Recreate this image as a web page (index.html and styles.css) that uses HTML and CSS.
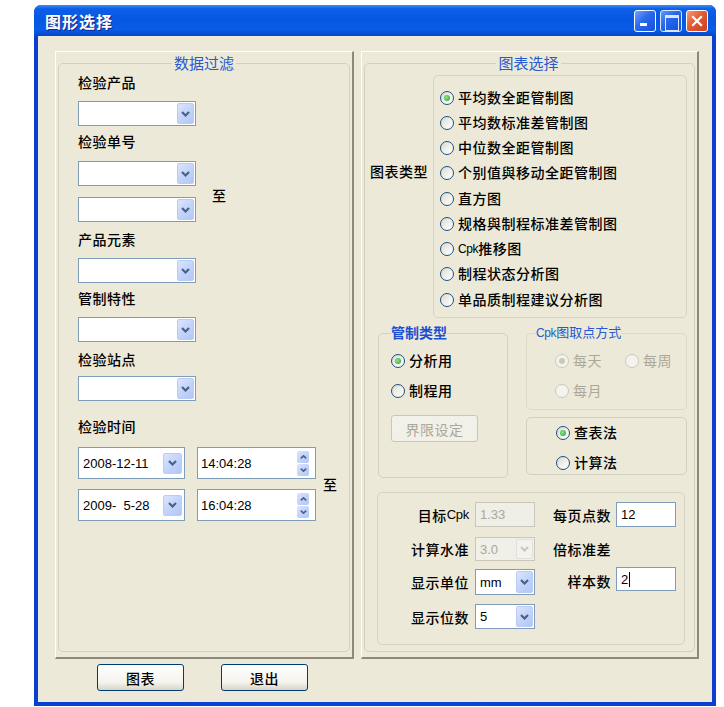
FILE: index.html
```html
<!DOCTYPE html>
<html lang="zh">
<head>
<meta charset="utf-8">
<title>图形选择</title>
<link rel="stylesheet" href="styles.css">
</head>
<body>
<div class="window">
  <div class="titlebar">
    <span class="title">图形选择</span>
    <div class="tb-buttons">
      <span class="tb-btn tb-min"></span>
      <span class="tb-btn tb-max"></span>
      <span class="tb-btn tb-close"><svg viewBox="0 0 12 12" width="12" height="12"><path d="M2 2 L10 10 M10 2 L2 10" stroke="#fff" stroke-width="2.2" stroke-linecap="square" fill="none"/></svg></span>
    </div>
  </div>
  <div class="client">
    <div class="panels">
      <div class="panel panel-left">
        <fieldset class="group group-left">
          <legend>数据过滤</legend>
          <div class="lbl mt2">检验产品</div>
          <div class="combo mt9"><span class="drop"><svg class="chev" viewBox="0 0 9 6"><polyline points="1,1 4.5,4.5 8,1"/></svg></span></div>
          <div class="lbl mt7">检验单号</div>
          <div class="range mt10">
            <div class="range-col">
              <div class="combo"><span class="drop"><svg class="chev" viewBox="0 0 9 6"><polyline points="1,1 4.5,4.5 8,1"/></svg></span></div>
              <div class="combo"><span class="drop"><svg class="chev" viewBox="0 0 9 6"><polyline points="1,1 4.5,4.5 8,1"/></svg></span></div>
            </div>
            <span class="to to-range">至</span>
          </div>
          <div class="lbl mt9">产品元素</div>
          <div class="combo mt9"><span class="drop"><svg class="chev" viewBox="0 0 9 6"><polyline points="1,1 4.5,4.5 8,1"/></svg></span></div>
          <div class="lbl mt7">管制特性</div>
          <div class="combo mt9"><span class="drop"><svg class="chev" viewBox="0 0 9 6"><polyline points="1,1 4.5,4.5 8,1"/></svg></span></div>
          <div class="lbl mt9">检验站点</div>
          <div class="combo mt7"><span class="drop"><svg class="chev" viewBox="0 0 9 6"><polyline points="1,1 4.5,4.5 8,1"/></svg></span></div>
          <div class="lbl mt17">检验时间</div>
          <div class="range mt11">
            <div class="dt-col">
              <div class="dt-row">
                <div class="date"><span class="val">2008-12-11</span><span class="drop drop-date"><svg class="chev" viewBox="0 0 9 6"><polyline points="1,1 4.5,4.5 8,1"/></svg></span></div>
                <div class="time"><span class="val">14:04:28</span><span class="spin"><span><svg class="chev-s" viewBox="0 0 7 4"><polyline points="0.8,3.4 3.5,0.8 6.2,3.4"/></svg></span><span><svg class="chev-s" viewBox="0 0 7 4"><polyline points="0.8,0.6 3.5,3.2 6.2,0.6"/></svg></span></span></div>
              </div>
              <div class="dt-row">
                <div class="date"><span class="val">2009-  5-28</span><span class="drop drop-date"><svg class="chev" viewBox="0 0 9 6"><polyline points="1,1 4.5,4.5 8,1"/></svg></span></div>
                <div class="time"><span class="val">16:04:28</span><span class="spin"><span><svg class="chev-s" viewBox="0 0 7 4"><polyline points="0.8,3.4 3.5,0.8 6.2,3.4"/></svg></span><span><svg class="chev-s" viewBox="0 0 7 4"><polyline points="0.8,0.6 3.5,3.2 6.2,0.6"/></svg></span></span></div>
              </div>
            </div>
            <span class="to to-dt">至</span>
          </div>
        </fieldset>
      </div>

      <div class="panel panel-right">
        <fieldset class="group group-right">
          <legend>图表选择</legend>
          <div class="chart-type">
            <div class="ct-label">图表类型</div>
            <div class="radio-box">
              <label class="radio row on"><span class="dot"></span>平均数全距管制图</label>
              <label class="radio row"><span class="dot"></span>平均数标准差管制图</label>
              <label class="radio row"><span class="dot"></span>中位数全距管制图</label>
              <label class="radio row"><span class="dot"></span>个别值與移动全距管制图</label>
              <label class="radio row"><span class="dot"></span>直方图</label>
              <label class="radio row"><span class="dot"></span>规格與制程标准差管制图</label>
              <label class="radio row"><span class="dot"></span><span class="lat">Cpk</span>推移图</label>
              <label class="radio row"><span class="dot"></span>制程状态分析图</label>
              <label class="radio row"><span class="dot"></span>单品质制程建议分析图</label>
            </div>
          </div>

          <div class="mid">
            <fieldset class="sub ctrl-type">
              <legend>管制类型</legend>
              <label class="radio on mt9"><span class="dot"></span>分析用</label>
              <label class="radio mt10"><span class="dot"></span>制程用</label>
              <div class="btn-disabled">界限设定</div>
            </fieldset>
            <div class="mid-right">
              <fieldset class="sub cpk">
                <legend><span class="lat">Cpk</span>图取点方式</legend>
                <div class="cpk-grid">
                  <label class="radio disabled on"><span class="dot"></span>每天</label>
                  <label class="radio disabled"><span class="dot"></span>每周</label>
                  <label class="radio disabled"><span class="dot"></span>每月</label>
                </div>
              </fieldset>
              <div class="calc-box">
                <label class="radio on"><span class="dot"></span>查表法</label>
                <label class="radio mt10"><span class="dot"></span>计算法</label>
              </div>
            </div>
          </div>

          <div class="params">
            <div class="plabel">目标<span class="lat2">Cpk</span></div>
            <div class="field disabled">1.33</div>
            <div class="plabel p3">每页点数</div>
            <div class="field">12</div>

            <div class="plabel p-tight">计算水准</div>
            <div class="combo small disabled tight"><span class="val">3.0</span><span class="drop"><svg class="chev" viewBox="0 0 9 6"><polyline points="1,1 4.5,4.5 8,1"/></svg></span></div>
            <div class="plabel p-left p-tight">倍标准差</div>
            <div></div>

            <div class="plabel p-unit">显示单位</div>
            <div class="combo small tall"><span class="val">mm</span><span class="drop"><svg class="chev" viewBox="0 0 9 6"><polyline points="1,1 4.5,4.5 8,1"/></svg></span></div>
            <div class="plabel p3 p-sample">样本数</div>
            <div class="field tight">2<span class="caret"></span></div>

            <div class="plabel">显示位数</div>
            <div class="combo small"><span class="val">5</span><span class="drop"><svg class="chev" viewBox="0 0 9 6"><polyline points="1,1 4.5,4.5 8,1"/></svg></span></div>
            <div></div>
            <div></div>
          </div>
        </fieldset>
      </div>
    </div>
    <div class="buttons">
      <button class="btn" type="button">图表</button>
      <button class="btn" type="button">退出</button>
    </div>
  </div>
</div>
</body>
</html>
```

FILE: styles.css
```css
* { box-sizing: border-box; }
html, body { margin: 0; padding: 0; background: #fff; }
body {
  font-family: "Liberation Sans", "Noto Sans CJK SC", sans-serif;
  font-size: 14px;
  font-weight: 500;
  color: #000;
}

/* window frame */
.window {
  margin: 5px 0 0 34px;
  width: 682px;
  height: 701px;
  display: flex;
  flex-direction: column;
  background: linear-gradient(to right, #0a3fd0, #0846d8 50%, #0a3fd0);
  border-radius: 7px 7px 0 0;
  overflow: hidden;
}
.titlebar {
  flex: none;
  height: 31px;
  display: flex;
  align-items: center;
  padding: 0 8px 0 11px;
  background: linear-gradient(to bottom, #3d8df6 0%, #0d5fe8 12%, #0657e2 45%, #0a5be6 80%, #0448c8 100%);
}
.title {
  font-family: "Noto Sans CJK SC", sans-serif;
  color: #fff;
  font-weight: bold;
  font-size: 16px;
  letter-spacing: 1px;
  text-shadow: 1px 1px 0 #0b2a8c;
}
.tb-buttons { margin-left: auto; display: flex; gap: 4px; margin-top: 1px; }
.tb-btn {
  width: 22px;
  height: 22px;
  border: 1px solid #fff;
  border-radius: 3px;
  position: relative;
  display: flex;
  align-items: center;
  justify-content: center;
  background: linear-gradient(135deg, #6ea2ff 0%, #2a68ec 45%, #1650dc 100%);
}
.tb-min::after {
  content: "";
  position: absolute;
  left: 5px;
  bottom: 5px;
  width: 7px;
  height: 3px;
  background: #fff;
}
.tb-max { opacity: 0.85; }
.tb-max::after {
  content: "";
  position: absolute;
  left: 4px;
  top: 4px;
  width: 12px;
  height: 12px;
  border: 1px solid #fff;
  border-top-width: 3px;
}
.tb-close { background: linear-gradient(135deg, #f59a78 0%, #e35b33 45%, #c8421d 100%); }

/* client area */
.client {
  flex: 1;
  margin: 0 4px 4px;
  background: #ece9d8;
  padding: 15px 13px 0 17px;
}
.panels { display: flex; gap: 7px; height: 608px; }
.panel {
  display: flex;
  border-top: 1px solid #fff;
  border-left: 1px solid #fff;
  border-right: 2px solid #8d8a7b;
  border-bottom: 2px solid #8d8a7b;
  padding: 2px 2px 5px 2px;
}
.panel-left { width: 299px; }
.panel-right { width: 338px; }

.group {
  flex: 1;
  min-width: 0;
  margin: 0;
  border: 1px solid #d3d0bf;
  border-radius: 5px;
  display: flex;
  flex-direction: column;
  align-items: flex-start;
}
.group > legend {
  margin: 0 auto;
  padding: 0 2px;
  color: #2a58d0;
  font-size: 15px;
  font-weight: 400;
  line-height: 18px;
  font-family: "Noto Sans CJK SC", sans-serif;
}
.group-left { padding: 0 19px 0 19px; }
.group-right { padding: 0 7px 0 5px; }

.lbl { font-size: 14px; line-height: 18px; letter-spacing: 0.5px; }
.mt2 { margin-top: 2px; }
.mt7 { margin-top: 7px; }
.mt9 { margin-top: 9px; }
.mt10 { margin-top: 10px; }
.mt11 { margin-top: 11px; }
.mt17 { margin-top: 17px; }

/* combo boxes */
.combo {
  width: 118px;
  height: 25px;
  border: 1px solid #7f9db9;
  background: #fff;
  display: flex;
  align-items: center;
  padding: 1px 1px 1px 0;
  font-size: 13px;
  font-weight: 400;
}
.combo .val { padding-left: 4px; }
.drop {
  margin-left: auto;
  width: 17px;
  height: 21px;
  border: 1px solid #bccbf0;
  border-radius: 2px;
  background: linear-gradient(135deg, #dbe5fd 0%, #c3d4fb 50%, #b2c7f5 100%);
  display: flex;
  align-items: center;
  justify-content: center;
  flex: none;
}
.chev { width: 9px; height: 6px; fill: none; stroke: #4d6185; stroke-width: 2.2; }
.chev-s { width: 7px; height: 4px; fill: none; stroke: #4d6185; stroke-width: 1.6; }

.combo.small { width: 60px; }
.combo.disabled { border-color: #c9c7ba; background: #f0efe8; color: #aca899; }
.combo.disabled .drop { background: #f3f2ec; border-color: #e2e0d6; }
.combo.disabled .chev { stroke: #cac8bb; }
.combo.tight { height: 24px; }
.combo.tight .drop { height: 20px; }
.combo.tall { height: 26px; margin-top: 2px; }
.combo.tall .drop { height: 22px; }

.range { display: flex; align-items: center; }
.range-col { display: flex; flex-direction: column; gap: 11px; }
.to { font-size: 14px; line-height: 18px; }
.to-range { margin-left: 16px; padding-top: 8px; }
.to-dt { margin-left: 7px; padding-top: 1px; }

.dt-col { display: flex; flex-direction: column; gap: 10px; }
.dt-row { display: flex; gap: 12px; }
.date, .time {
  height: 32px;
  border: 1px solid #7f9db9;
  background: #fff;
  display: flex;
  align-items: center;
  font-size: 13px;
  font-weight: 400;
}
.date { width: 107px; padding: 0 2px 0 4px; }
.time { width: 119px; padding: 0 6px 0 3px; }
.val { white-space: pre; }
.drop-date { width: 19px; height: 21px; }
.spin {
  margin-left: auto;
  width: 12px;
  height: 25px;
  display: flex;
  flex-direction: column;
  gap: 1px;
}
.spin > span {
  flex: 1;
  border-radius: 2px;
  background: linear-gradient(135deg, #dbe5fd 0%, #c3d4fb 50%, #b2c7f5 100%);
  display: flex;
  align-items: center;
  justify-content: center;
}

/* radios */
.radio {
  display: flex;
  align-items: center;
  height: 20px;
  line-height: 18px;
  white-space: nowrap;
  letter-spacing: 0.5px;
  font-size: 14px;
}
.radio .dot {
  flex: none;
  width: 14px;
  height: 14px;
  margin-right: 4px;
  border: 1px solid #1c5180;
  border-radius: 50%;
  position: relative;
  background: linear-gradient(135deg, #d8d7d0 0%, #f2f1ec 55%, #ffffff 100%);
}
.radio.on .dot::after {
  content: "";
  position: absolute;
  left: 3px;
  top: 3px;
  width: 6px;
  height: 6px;
  border-radius: 50%;
  background: radial-gradient(circle at 40% 40%, #8fe58f, #21a121);
}
.radio.disabled { color: #aca899; font-weight: 400; }
.radio.disabled .dot { border-color: #cac8bb; background: #f4f3ee; }
.radio.disabled.on .dot::after { background: #cac8bb; }
.lat { font-size: 12px; letter-spacing: -0.4px; font-weight: 400; }
.lat2 { font-size: 13px; letter-spacing: -0.3px; font-weight: 400; }

/* right panel */
.chart-type { display: flex; margin-top: 3px; align-self: stretch; }
.ct-label { width: 63px; margin-top: 88px; line-height: 18px; letter-spacing: 0.5px; }
.radio-box {
  width: 254px;
  border: 1px solid #d6d3c3;
  border-radius: 5px;
  padding: 9px 0 5px 6px;
}
.radio.row { height: 25.25px; }

.mid { display: flex; margin-top: 6px; padding-left: 8px; align-items: flex-start; }
.sub {
  margin: 0;
  min-width: 0;
  border: 1px solid #d3d0bf;
  border-radius: 5px;
}
.sub > legend {
  padding: 0;
  color: #1e4fd4;
  font-size: 14px;
  line-height: 18px;
  letter-spacing: 0.5px;
}
.ctrl-type { width: 130px; height: 154px; padding: 0 0 0 12px; }
.ctrl-type > legend { font-weight: 600; letter-spacing: 0; }
.btn-disabled {
  margin-top: 14px;
  width: 87px;
  height: 27px;
  border: 1px solid #c9c7ba;
  border-radius: 3px;
  background: #f1f0e9;
  color: #aca899;
  font-weight: 400;
  display: flex;
  align-items: center;
  justify-content: center;
  letter-spacing: 0.5px;
}
.mid-right { margin-left: 18px; width: 161px; display: flex; flex-direction: column; }
.cpk { height: 86px; padding: 0 0 0 9px; border-color: #dcd9ca; }
.cpk > legend { font-size: 13px; letter-spacing: 0; color: #2a58d0; font-weight: 400; }
.cpk-grid {
  margin: 9px 0 0 19px;
  display: grid;
  grid-template-columns: 70px 60px;
  row-gap: 10px;
}
.calc-box {
  margin-top: 7px;
  height: 58px;
  border: 1px solid #d3d0bf;
  border-radius: 5px;
  padding: 5px 0 0 29px;
}

.params {
  margin: 14px 0 0 7px;
  width: 308px;
  height: 153px;
  border: 1px solid #d6d3c3;
  border-radius: 5px;
  padding-top: 9px;
  display: grid;
  grid-template-columns: 91px 66px 81px 60px;
  grid-template-rows: 35px 30px 37px 26px;
  align-items: start;
}
.params > .combo, .params > .field { margin-left: 6px; }
.params > .field:nth-child(4n) { margin-left: 0; }
.plabel {
  height: 25px;
  display: flex;
  align-items: center;
  justify-content: flex-end;
  letter-spacing: 0.5px;
  white-space: nowrap;
}
.plabel.p3 { padding-right: 5px; }
.plabel.p-left { justify-content: flex-start; padding-left: 18px; }
.plabel.p-tight { height: 24px; }
.plabel.p-unit { height: 26px; margin-top: 2px; }
.plabel.p-sample { height: 26px; margin-top: 1px; }
.field {
  width: 60px;
  height: 25px;
  border: 1px solid #7f9db9;
  background: #fff;
  display: flex;
  align-items: center;
  padding-left: 4px;
  font-size: 13px;
  font-weight: 400;
}
.field.tight { height: 24px; }
.field.disabled { border-color: #c9c7ba; background: #efeee7; color: #aca899; }
.caret { width: 1px; height: 15px; background: #000; margin-left: 1px; }

/* bottom buttons */
.buttons { display: flex; gap: 37px; margin-top: 5px; padding-left: 42px; }
.btn {
  width: 87px;
  height: 27px;
  border: 1px solid #003c74;
  border-radius: 3px;
  background: linear-gradient(to bottom, #ffffff 0%, #f4f3ee 70%, #d8d3c6 100%);
  font-family: "Noto Sans CJK SC", sans-serif;
  font-size: 14px;
  font-weight: 500;
  letter-spacing: 0.5px;
  color: #000;
  padding: 0;
}
```
